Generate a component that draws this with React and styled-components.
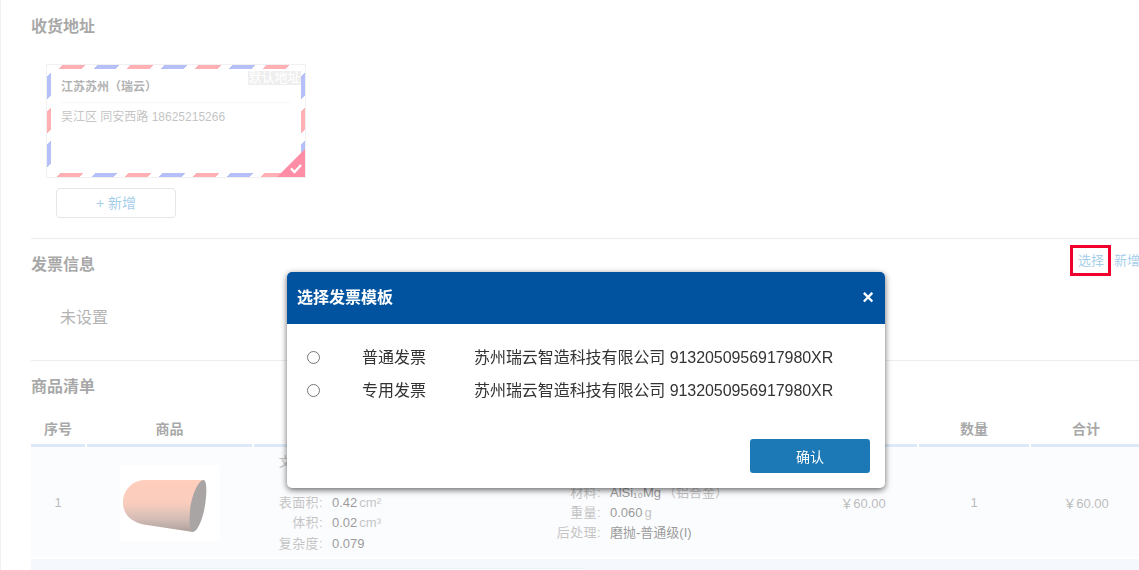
import React from "react";
import styled, { createGlobalStyle } from "styled-components";

const GlobalStyle = createGlobalStyle`
  html, body {
    margin: 0;
    height: 570px;
    overflow: hidden;
    background: #fff;
  }
  body {
    font-family: "Liberation Sans", "Noto Sans CJK SC", sans-serif;
    color: #333;
  }
`;

const Page = styled.div`
  box-sizing: border-box;
  width: 1140px;
  height: 570px;
  padding-left: 30px;
  border-left: 1px solid #e2e2e2;
  overflow: hidden;
`;

const Section = styled.section`
  border-top: ${p => (p.$first ? "none" : "1px solid #d9d9d9")};
`;

const SectionHead = styled.div`
  display: flex;
  align-items: center;
  box-sizing: border-box;
  height: ${p => (p.$first ? "52px" : "50px")};
  padding-bottom: 2px;
`;

const Title = styled.h2`
  margin: 0;
  font-size: 16px;
  font-weight: bold;
  color: #515151;
`;

const Actions = styled.div`
  display: flex;
  gap: 10px;
  margin-left: auto;
  margin-bottom: 4px;
`;

const Pick = styled.a`
  position: relative;
  font-size: 13px;
  line-height: 20px;
  color: #499bd5;
`;

const Highlight = styled.span`
  position: absolute;
  z-index: 20;
  top: -6px;
  bottom: -5px;
  left: -8px;
  right: -7px;
  border: 3px solid #f0002c;
`;

const AddressArea = styled.div`
  height: 186px;
  padding: 13px 0 0 16px;
  box-sizing: border-box;
`;

// airmail edge: red leads on the long sides, blue on the short ones
const stripes = (first, second) => `repeating-linear-gradient(
  135deg,
  transparent 0,
  transparent 4.24px,
  ${first} 4.24px,
  ${first} 20.3px,
  transparent 20.3px,
  transparent 28.3px,
  ${second} 28.3px,
  ${second} 44.3px,
  transparent 44.3px,
  transparent 48px
)`;

const Envelope = styled.div`
  position: relative;
  box-sizing: border-box;
  width: 258px;
  height: 112px;
  padding: 4px 15px 0 14px;
  outline: 1px solid #e0e0e0;
  background-color: #fff;
  background-repeat: no-repeat;
  background-image:
    ${stripes("#ff616b", "#6b7ff1")},
    ${stripes("#ff616b", "#6b7ff1")},
    ${stripes("#6b7ff1", "#ff616b")},
    ${stripes("#6b7ff1", "#ff616b")};
  background-size: 233px 4px, 233px 4px, 4px 100px, 4px 100px;
  background-position: 10px 0, 8px 100%, 0 6px, 100% 6px;
`;

const DefaultTag = styled.span`
  position: absolute;
  top: 6px;
  right: 4px;
  width: 53px;
  height: 14px;
  background: #ddd;
  color: #fff;
  font-size: 13px;
  line-height: 14px;
  text-align: center;
  white-space: nowrap;
`;

const Receiver = styled.div`
  height: 33px;
  line-height: 36px;
  font-size: 12px;
  font-weight: bold;
  color: #666;
  border-bottom: 1px solid #eee;
`;

const AddressLine = styled.div`
  line-height: 28px;
  font-size: 12px;
  color: #888;
`;

const Corner = styled.span`
  position: absolute;
  right: 0;
  bottom: 0;
  width: 28px;
  height: 28px;
  background: #ff1a4b;
  clip-path: polygon(100% 0, 100% 100%, 0 100%);
  display: flex;
  align-items: flex-end;
  justify-content: flex-end;
`;

const AddButton = styled.button`
  display: block;
  box-sizing: border-box;
  width: 120px;
  height: 30px;
  margin: 11px 0 0 9px;
  padding: 0 0 3px;
  border: 1px solid #ccc;
  border-radius: 4px;
  background: #fff;
  color: #499bd5;
  font: 14px "Liberation Sans", "Noto Sans CJK SC", sans-serif;
`;

const Unset = styled.div`
  height: 71px;
  padding: 15px 0 0 29px;
  box-sizing: border-box;
  font-size: 16px;
  line-height: 28px;
  color: #666;
`;

const TableGrid = styled.div`
  display: grid;
  grid-template-columns: 54px 165px 553px 108px 110px 110px;
  column-gap: 2px;
`;

const HeadCell = styled.div`
  height: 36px;
  box-sizing: border-box;
  padding-top: 9px;
  border-bottom: 3px solid #bbd3f5;
  font-size: 14px;
  line-height: 18px;
  font-weight: bold;
  text-align: center;
  color: #515151;
`;

const ItemRow = styled(TableGrid)`
  height: 110px;
  background: #f7f9fd;
  align-items: center;
  font-size: 13px;
  color: #777;
`;

const Cell = styled.div`
  text-align: center;
`;

const Thumb = styled.div`
  width: 100px;
  height: 76px;
  margin: 2px 0 0 33px;
  background: #fff;
`;

const SpecColumns = styled.div`
  display: flex;
  margin-top: 2px;
`;

const SpecList = styled.dl`
  display: grid;
  grid-template-columns: ${p => p.$label}px auto;
  column-gap: 9px;
  width: ${p => p.$width}px;
  margin: 0;
  line-height: 20.4px;
  align-self: center;
  & dt {
    text-align: right;
    color: #888;
    letter-spacing: 0.4px;
    white-space: nowrap;
  }
  & dd {
    margin: 0;
    color: #333;
    white-space: nowrap;
  }
  & small {
    font-size: 13px;
    color: #888;
    margin-left: 2px;
  }
`;

const NextRow = styled.div`
  height: 60px;
  margin-top: 2px;
  padding: 9px 0 0 89px;
  background: #ebf1fb;
`;

const NextPanel = styled.div`
  box-sizing: border-box;
  width: 466px;
  height: 60px;
  background: #fff;
  border: 1px solid #dbe6f5;
`;

const Overlay = styled.div`
  position: fixed;
  inset: 0;
  z-index: 10;
  background: rgba(255, 255, 255, 0.5);
`;

const Dialog = styled.div`
  position: fixed;
  z-index: 30;
  left: 287px;
  top: 272px;
  width: 598px;
  height: 216px;
  display: flex;
  flex-direction: column;
  background: #fff;
  border-radius: 5px;
  box-shadow: 0 2px 6px rgba(0, 0, 0, 0.6);
  overflow: hidden;
`;

const DialogHead = styled.div`
  display: flex;
  align-items: center;
  justify-content: space-between;
  box-sizing: border-box;
  height: 52px;
  padding: 0 10px 4px;
  background: #01539f;
  color: #fff;
  font-size: 16px;
  font-weight: bold;
`;

const Close = styled.span`
  font-size: 20px;
  line-height: 20px;
  margin: 2px 1px 0 0;
`;

const DialogBody = styled.div`
  flex: 1;
  padding: 17px 0 0 20px;
`;

const TemplateRow = styled.label`
  display: grid;
  grid-template-columns: 55px 112px auto;
  align-items: center;
  height: 33px;
  font-size: 16px;
  color: #333;
  & input {
    margin: 0;
    width: 13px;
    height: 13px;
  }
  & span {
    margin-bottom: 4px;
  }
`;

const Company = styled.span`
  letter-spacing: -0.06px;
`;

const DialogFoot = styled.div`
  display: flex;
  justify-content: flex-end;
  padding: 0 15px 15px;
`;

const Confirm = styled.button`
  width: 120px;
  height: 34px;
  border: none;
  border-radius: 3px;
  background: #1d79b6;
  color: #fff;
  font: 14px "Liberation Sans", "Noto Sans CJK SC", sans-serif;
`;

const Part = () => (
  <svg width="100" height="76" viewBox="0 0 100 76">
    <defs>
      <linearGradient id="body" x1="0" y1="0" x2="0" y2="1">
        <stop offset="0" stopColor="#ff9c78" />
        <stop offset="0.45" stopColor="#f29a7a" />
        <stop offset="0.75" stopColor="#a87a6c" />
        <stop offset="1" stopColor="#5a4038" />
      </linearGradient>
    </defs>
    <path
      d="M24 15 L83 15 C76 30 74 52 73 67 L27 60 C12 58 3 50 3 38 C3 26 11 16 24 15 Z"
      fill="url(#body)"
    />
    <path
      d="M83 15 C86 14 87 22 86 32 C85 48 79 66 73 67 C70 67 69 58 70 46 C71 33 77 17 83 15 Z"
      fill="#554a4a"
    />
  </svg>
);

const templates = ["普通发票", "专用发票"];

export default function App() {
  return (
    <>
      <GlobalStyle />
      <Page>
        <Section $first>
          <SectionHead $first>
            <Title>收货地址</Title>
          </SectionHead>
          <AddressArea>
            <Envelope>
              <DefaultTag>默认地址</DefaultTag>
              <Receiver>江苏苏州（瑞云）</Receiver>
              <AddressLine>吴江区 同安西路 18625215266</AddressLine>
              <Corner>
                <svg width="14" height="14" viewBox="0 0 14 14" style={{ margin: "0 2px 2px 0" }}>
                  <path d="M2 7.5 L5.5 11 L12 4" fill="none" stroke="#fff" strokeWidth="2.4" />
                </svg>
              </Corner>
            </Envelope>
            <AddButton>+ 新增</AddButton>
          </AddressArea>
        </Section>

        <Section>
          <SectionHead>
            <Title>发票信息</Title>
            <Actions>
              <Pick>
                选择
                <Highlight />
              </Pick>
              <Pick>新增</Pick>
            </Actions>
          </SectionHead>
          <Unset>未设置</Unset>
        </Section>

        <Section>
          <SectionHead>
            <Title>商品清单</Title>
          </SectionHead>
          <TableGrid>
            <HeadCell>序号</HeadCell>
            <HeadCell>商品</HeadCell>
            <HeadCell>规格</HeadCell>
            <HeadCell>单价</HeadCell>
            <HeadCell>数量</HeadCell>
            <HeadCell>合计</HeadCell>
          </TableGrid>
          <ItemRow>
            <Cell>1</Cell>
            <Thumb>
              <Part />
            </Thumb>
            <SpecColumns>
              <SpecList $label={69} $width={278}>
                <dt>文件名:</dt>
                <dd>cylinder.stl</dd>
                <dt>尺寸:</dt>
                <dd>10×10×20</dd>
                <dt>表面积:</dt>
                <dd>0.42<small>cm²</small></dd>
                <dt>体积:</dt>
                <dd>0.02<small>cm³</small></dd>
                <dt>复杂度:</dt>
                <dd>0.079</dd>
              </SpecList>
              <SpecList $label={69} $width={260}>
                <dt>工艺:</dt>
                <dd>SLM</dd>
                <dt>材料:</dt>
                <dd>AlSi₁₀Mg<small>（铝合金）</small></dd>
                <dt>重量:</dt>
                <dd>0.060<small>g</small></dd>
                <dt>后处理:</dt>
                <dd>磨抛-普通级(I)</dd>
              </SpecList>
            </SpecColumns>
            <Cell>￥60.00</Cell>
            <Cell>1</Cell>
            <Cell>￥60.00</Cell>
          </ItemRow>
          <NextRow>
            <NextPanel />
          </NextRow>
        </Section>
      </Page>

      <Overlay />
      <Dialog>
        <DialogHead>
          选择发票模板
          <Close>×</Close>
        </DialogHead>
        <DialogBody>
          {templates.map(name => (
            <TemplateRow key={name}>
              <input type="radio" name="invoice" />
              <span>{name}</span>
              <Company>苏州瑞云智造科技有限公司 9132050956917980XR</Company>
            </TemplateRow>
          ))}
        </DialogBody>
        <DialogFoot>
          <Confirm>确认</Confirm>
        </DialogFoot>
      </Dialog>
    </>
  );
}
